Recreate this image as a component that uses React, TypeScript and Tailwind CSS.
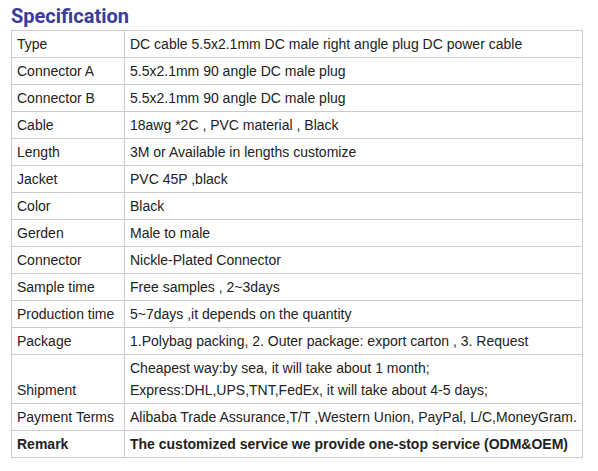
import React from 'react';

type Row = { label: string; value: React.ReactNode; bold?: boolean };

const rows: Row[] = [
  { label: 'Type', value: 'DC cable 5.5x2.1mm DC male right angle plug DC power cable' },
  { label: 'Connector A', value: '5.5x2.1mm 90 angle DC male plug' },
  { label: 'Connector B', value: '5.5x2.1mm 90 angle DC male plug' },
  { label: 'Cable', value: '18awg *2C , PVC material , Black' },
  { label: 'Length', value: '3M or Available in lengths customize' },
  { label: 'Jacket', value: 'PVC 45P ,black' },
  { label: 'Color', value: 'Black' },
  { label: 'Gerden', value: 'Male to male' },
  { label: 'Connector', value: 'Nickle-Plated Connector' },
  { label: 'Sample time', value: 'Free samples , 2~3days' },
  { label: 'Production time', value: '5~7days ,it depends on the quantity' },
  { label: 'Package', value: '1.Polybag packing, 2. Outer package: export carton , 3. Request' },
  {
    label: 'Shipment',
    value: (
      <>
        <div>Cheapest way:by sea, it will take about 1 month;</div>
        <div>Express:DHL,UPS,TNT,FedEx, it will take about 4-5 days;</div>
      </>
    ),
  },
  { label: 'Payment Terms', value: 'Alibaba Trade Assurance,T/T ,Western Union, PayPal, L/C,MoneyGram.' },
  { label: 'Remark', value: 'The customized service we provide one-stop service (ODM&OEM)', bold: true },
];

export default function App() {
  return (
    <div className="w-[598px] h-[471px] bg-white font-['Liberation_Sans',Arial,sans-serif] text-[#222]">
      <h2 className="pl-[11px] pt-[3px] h-[30px] text-[20px] leading-[26px] font-bold text-[#3b3c99] font-['Roboto',sans-serif]">
        Specification
      </h2>
      <table className="ml-[11px] w-[572px] border-collapse text-[14px] leading-[22px]">
        <tbody>
          {rows.map((row) => (
            <tr key={row.label} className={row.bold ? 'font-bold' : ''}>
              <td className="w-[113px] border border-[#cccccc] px-[5px] py-[2px] align-bottom whitespace-nowrap">
                {row.label}
              </td>
              <td className="border border-[#cccccc] px-[5px] py-[2px] align-bottom whitespace-nowrap">
                {row.value}
              </td>
            </tr>
          ))}
        </tbody>
      </table>
    </div>
  );
}
